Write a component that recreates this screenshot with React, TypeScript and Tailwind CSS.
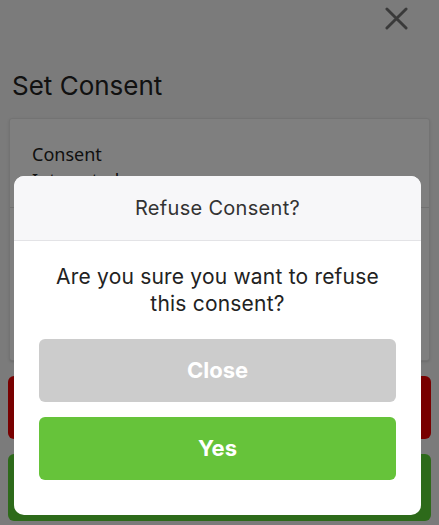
import React from 'react';

export default function App() {
  return (
    <div className="relative w-[439px] h-[525px] overflow-hidden bg-[#f6f6f6] font-['Inter','Liberation_Sans',sans-serif]">
      {/* Page behind the dialog */}
      <div className="flex justify-end pt-[7px] pr-[31px]">
        <svg className="w-[23px] h-[23px] text-[#747474]" viewBox="0 0 24 24" fill="none" stroke="currentColor">
          <path strokeLinecap="round" strokeWidth={3} d="M2 2l20 20M22 2L2 22" />
        </svg>
      </div>
      <h1 className="pl-3 mt-[40px] text-[26px] leading-[32px] text-[#222]">Set Consent</h1>

      <div className="mx-[9px] mt-[16px] h-[243px] bg-white border border-[#e6e6e6] rounded-[3px] shadow-sm">
        <div className="pl-[22px] pt-[22px] pb-[14px] text-[18px] leading-[26px] text-[#222] font-['Noto_Sans',sans-serif] border-b border-[#e2e2e2]">
          <div>Consent</div>
          <div>Interested</div>
        </div>
      </div>

      <div className="mx-[8px] mt-[15px] h-[63px] rounded-[6px] bg-[#f00000]" />
      <div className="mx-[8px] mt-[15px] h-[67px] rounded-[6px] bg-[#5bd434]" />

      {/* Overlay */}
      <div className="absolute inset-0 bg-black/50" />

      {/* Dialog */}
      <div className="absolute left-[14px] top-[176px] w-[407px] h-[339px] rounded-[10px] bg-white overflow-hidden">
        <div className="h-[65px] flex items-center justify-center bg-[#f7f7f9] border-b border-[#e3e3e6] text-[20px] tracking-[0.3px] text-[#333]">
          Refuse Consent?
        </div>
        <p className="pt-[22px] text-center text-[21px] tracking-[0.2px] leading-[27px] text-[#222]">
          Are you sure you want to refuse
          <br />
          this consent?
        </p>
        <div className="px-[25px] pt-[22px] flex flex-col gap-[15px]">
          <button className="h-[63px] rounded-[6px] bg-[#cccccc] text-white font-bold text-[22px]">
            Close
          </button>
          <button className="h-[63px] rounded-[6px] bg-[#66c33a] text-white font-bold text-[22px]">
            Yes
          </button>
        </div>
      </div>
    </div>
  );
}
